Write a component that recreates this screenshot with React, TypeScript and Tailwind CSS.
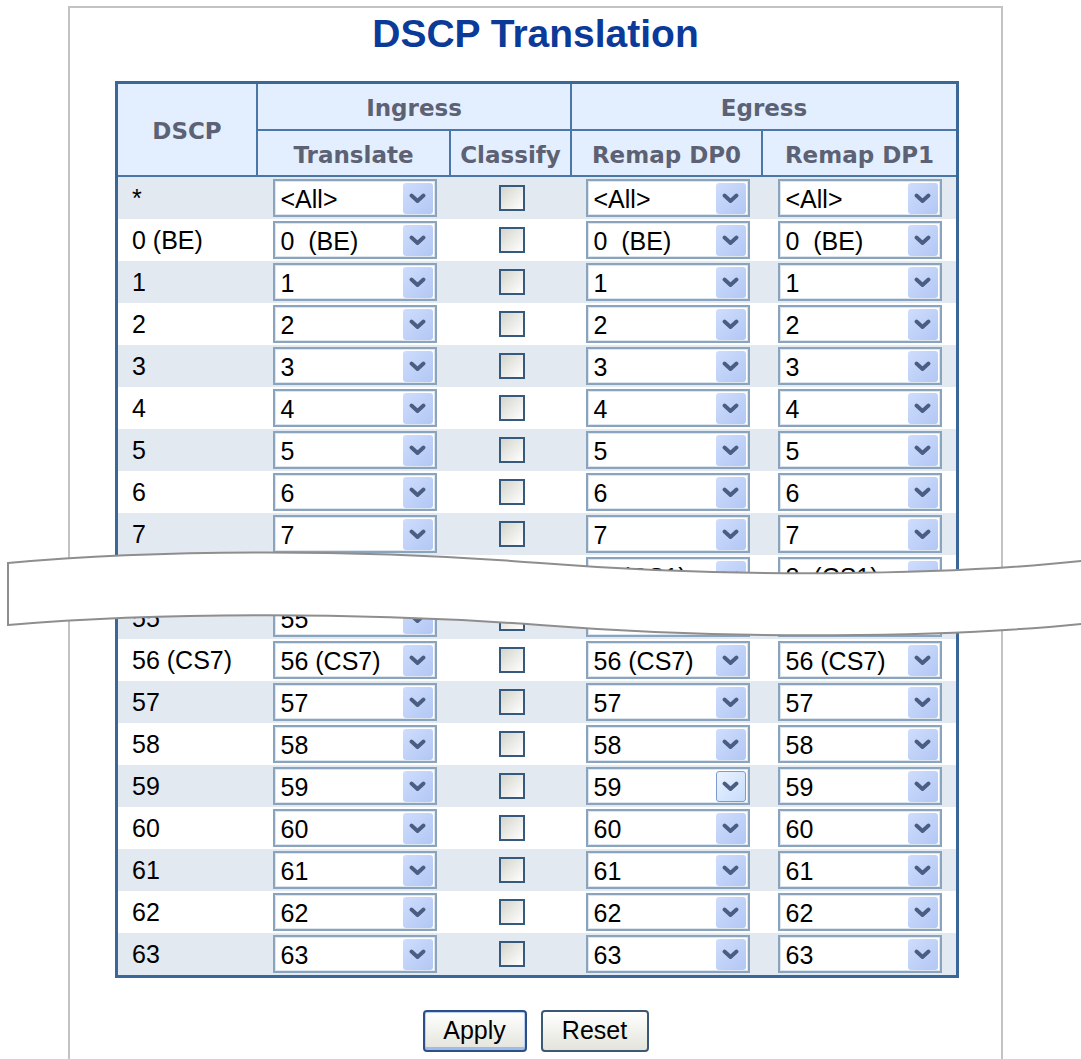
import React from 'react';

type Row = { label: string; value: string };

const rows: Row[] = [
  { label: '*', value: '<All>' },
  { label: '0 (BE)', value: '0  (BE)' },
  ...['1', '2', '3', '4', '5', '6', '7'].map((n) => ({ label: n, value: n })),
  { label: '8 (CS1)', value: '8  (CS1)' },
  { label: '55', value: '55' },
  { label: '56 (CS7)', value: '56 (CS7)' },
  ...['57', '58', '59', '60', '61', '62', '63'].map((n) => ({ label: n, value: n })),
];

const cols = 'grid grid-cols-[140px_193px_121px_191px_193px]';

function Chevron() {
  return (
    <svg width="17" height="11" viewBox="0 0 17 11">
      <path
        d="M2.5 2.5 L8.5 8 L14.5 2.5"
        fill="none"
        stroke="#4b5d80"
        strokeWidth="3.8"
        strokeLinecap="round"
        strokeLinejoin="round"
      />
    </svg>
  );
}

function Select({ value, hover }: { value: string; hover?: boolean }) {
  return (
    <div className="flex h-[38px] w-[164px] items-center justify-between border-2 border-[#8ba4be] bg-white pl-[6px] pr-[2px] shadow-[inset_0_0_0_1px_#dde6ef]">
      <span className="whitespace-pre pt-[2px] text-[25px] leading-none text-black">{value}</span>
      {hover ? (
        <span className="flex h-[31px] w-[30px] items-center justify-center rounded-[3px] border border-[#7d9bcf] bg-linear-to-br from-[#eaf3ff] to-[#c7dcfb]">
          <Chevron />
        </span>
      ) : (
        <span className="flex h-[31px] w-[30px] items-center justify-center rounded-[3px] bg-linear-to-br from-[#cfddfd] to-[#b2c7f4]">
          <Chevron />
        </span>
      )}
    </div>
  );
}

function Checkbox() {
  return <span className="block h-[26px] w-[26px] border-2 border-[#36597e] bg-linear-to-br from-[#d5d5ce] to-white" />;
}

export default function App() {
  return (
    <div className="relative h-[1059px] w-[1081px] overflow-hidden bg-white font-['Liberation_Sans',Arial,sans-serif]">
      <div className="ml-[68px] mt-[6px] min-h-[1100px] w-[935px] border-2 border-[#c3c3c3]">
        <h1 className="pt-[6px] text-center text-[39px] font-bold leading-[39px] text-[#0b3a99]">DSCP Translation</h1>

        <div className="ml-[45px] mt-[28px] w-[844px] border-[3px] border-[#3a6798]">
          <div className={`${cols} grid-rows-[47px_46px] bg-[#e3efff] font-['DejaVu_Sans',Verdana,sans-serif] text-[23px] font-bold text-[#5c6173]`}>
            <div className="row-span-2 flex items-center justify-center border-b-2 border-r-2 border-[#4a77a6] pt-[3px]">DSCP</div>
            <div className="col-span-2 flex items-center justify-center border-b-2 border-r-2 border-[#4a77a6] pt-[3px]">Ingress</div>
            <div className="col-span-2 flex items-center justify-center border-b-2 border-[#4a77a6] pt-[3px]">Egress</div>
            <div className="flex items-center justify-center border-b-2 border-r-2 border-[#4a77a6] pt-[4px]">Translate</div>
            <div className="flex items-center justify-center border-b-2 border-r-2 border-[#4a77a6] pt-[4px]">Classify</div>
            <div className="flex items-center justify-center border-b-2 border-r-2 border-[#4a77a6] pt-[4px]">Remap DP0</div>
            <div className="flex items-center justify-center border-b-2 border-[#4a77a6] pt-[4px]">Remap DP1</div>
          </div>

          {rows.map((r, i) => (
            <div key={r.label} className={`${cols} h-[42px] ${i % 2 === 0 ? 'bg-[#e2e9f1]' : 'bg-white'} text-[25px] text-black`}>
              <div className="flex items-center pl-[14px] pt-[2px]">{r.label}</div>
              <div className="flex items-center justify-center">
                <Select value={r.value} />
              </div>
              <div className="flex items-center justify-center">
                <Checkbox />
              </div>
              <div className="flex items-center justify-center">
                <Select value={r.value} hover={r.label === '59'} />
              </div>
              <div className="flex items-center justify-center">
                <Select value={r.value} />
              </div>
            </div>
          ))}
        </div>

        <div className="mt-[32px] flex justify-center gap-[14px]">
          <button className="h-[42px] w-[104px] rounded-[4px] border-2 border-[#2d4f86] bg-linear-to-b from-white to-[#e4e4dc] text-[25px] text-black shadow-[inset_0_-3px_0_#9dbcea,inset_0_0_0_1px_#b9d0f2]">
            Apply
          </button>
          <button className="h-[42px] w-[108px] rounded-[4px] border-2 border-[#3b5874] bg-linear-to-b from-white to-[#e4e4dc] text-[25px] text-black">
            Reset
          </button>
        </div>
      </div>

      <svg className="pointer-events-none absolute left-0 top-0" width="1081" height="1059">
        <path
          d="M8 563 C150 550 350 548 540 563 C730 578 950 576 1090 560 L1090 623 C950 638 730 640 540 625 C350 611 150 613 8 625 Z"
          fill="#ffffff"
          stroke="#8e8e8e"
          strokeWidth="2"
        />
      </svg>
    </div>
  );
}
